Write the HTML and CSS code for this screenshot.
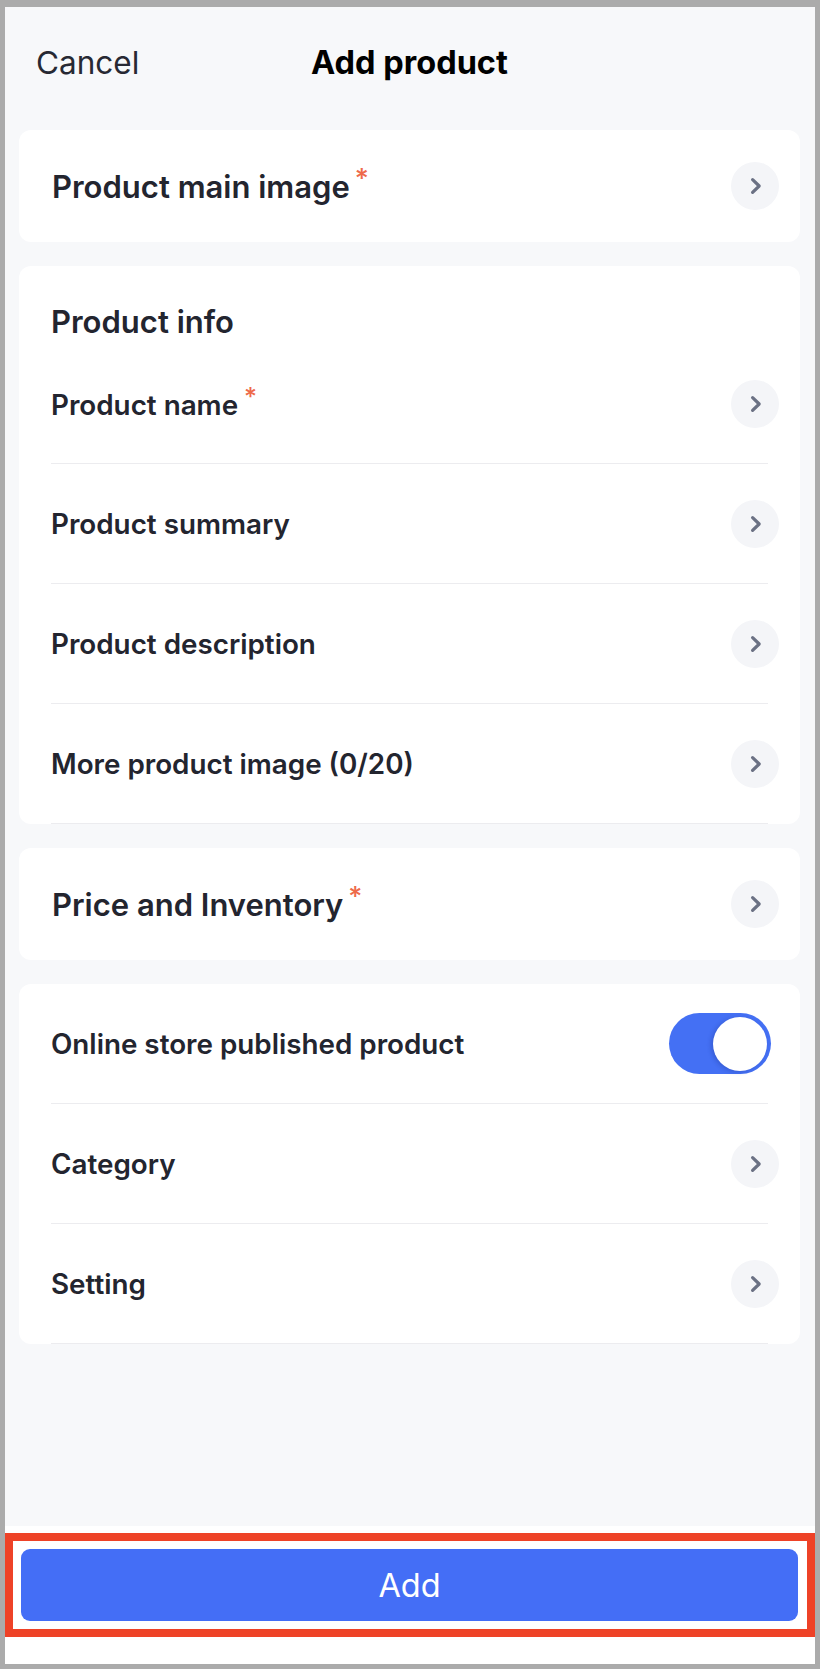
FILE: index.html
```html
<!DOCTYPE html>
<html lang="en">
<head>
<meta charset="utf-8">
<title>Add product</title>
<link rel="stylesheet" href="styles.css">
</head>
<body>
<div class="screen">
  <div class="content">
    <header class="topbar">
      <span class="cancel">Cancel</span>
      <span class="title">Add product</span>
      <span class="spacer"></span>
    </header>

    <section class="card card-single">
      <span class="card-title">Product main image<span class="req">*</span></span>
      <span class="chev"><svg viewBox="0 0 12 18" width="12" height="18"><path d="M2.6 2.6 L9.2 9 L2.6 15.4" fill="none" stroke="#6b7184" stroke-width="3.2" stroke-linecap="round" stroke-linejoin="round"/></svg></span>
    </section>

    <section class="card">
      <div class="card-head">Product info</div>
      <div class="row">
        <span class="row-label">Product name<span class="req req-sm">*</span></span>
        <span class="chev"><svg viewBox="0 0 12 18" width="12" height="18"><path d="M2.6 2.6 L9.2 9 L2.6 15.4" fill="none" stroke="#6b7184" stroke-width="3.2" stroke-linecap="round" stroke-linejoin="round"/></svg></span>
      </div>
      <div class="row">
        <span class="row-label">Product summary</span>
        <span class="chev"><svg viewBox="0 0 12 18" width="12" height="18"><path d="M2.6 2.6 L9.2 9 L2.6 15.4" fill="none" stroke="#6b7184" stroke-width="3.2" stroke-linecap="round" stroke-linejoin="round"/></svg></span>
      </div>
      <div class="row">
        <span class="row-label">Product description</span>
        <span class="chev"><svg viewBox="0 0 12 18" width="12" height="18"><path d="M2.6 2.6 L9.2 9 L2.6 15.4" fill="none" stroke="#6b7184" stroke-width="3.2" stroke-linecap="round" stroke-linejoin="round"/></svg></span>
      </div>
      <div class="row">
        <span class="row-label">More product image (0/20)</span>
        <span class="chev"><svg viewBox="0 0 12 18" width="12" height="18"><path d="M2.6 2.6 L9.2 9 L2.6 15.4" fill="none" stroke="#6b7184" stroke-width="3.2" stroke-linecap="round" stroke-linejoin="round"/></svg></span>
      </div>
    </section>

    <section class="card card-single">
      <span class="card-title">Price and Inventory<span class="req">*</span></span>
      <span class="chev"><svg viewBox="0 0 12 18" width="12" height="18"><path d="M2.6 2.6 L9.2 9 L2.6 15.4" fill="none" stroke="#6b7184" stroke-width="3.2" stroke-linecap="round" stroke-linejoin="round"/></svg></span>
    </section>

    <section class="card">
      <div class="row">
        <span class="row-label">Online store published product</span>
        <span class="toggle"><span class="knob"></span></span>
      </div>
      <div class="row">
        <span class="row-label">Category</span>
        <span class="chev"><svg viewBox="0 0 12 18" width="12" height="18"><path d="M2.6 2.6 L9.2 9 L2.6 15.4" fill="none" stroke="#6b7184" stroke-width="3.2" stroke-linecap="round" stroke-linejoin="round"/></svg></span>
      </div>
      <div class="row">
        <span class="row-label">Setting</span>
        <span class="chev"><svg viewBox="0 0 12 18" width="12" height="18"><path d="M2.6 2.6 L9.2 9 L2.6 15.4" fill="none" stroke="#6b7184" stroke-width="3.2" stroke-linecap="round" stroke-linejoin="round"/></svg></span>
      </div>
    </section>
  </div>

  <footer class="footer">
    <div class="highlight">
      <button class="add-btn" type="button">Add</button>
    </div>
  </footer>
</div>
</body>
</html>
```

FILE: styles.css
```css
* { box-sizing: border-box; }

html, body {
  margin: 0;
  padding: 0;
}

body {
  background: #ababab;
  padding: 7px 5px 5px 5px;
  font-family: Inter, "Noto Sans", "Liberation Sans", sans-serif;
  color: #23252f;
}

.screen {
  width: 810px;
  height: 1657px;
  background: #f7f8fa;
  display: flex;
  flex-direction: column;
}

.content {
  flex: 1;
  padding: 0 15px 0 14px;
}

.topbar {
  display: grid;
  grid-template-columns: 1fr auto 1fr;
  align-items: center;
  padding: 36px 0 47px 0;
  line-height: 40px;
}

.cancel {
  font-size: 31.5px;
  font-weight: 400;
  color: #272933;
  padding-left: 17px;
}

.title {
  font-size: 32.5px;
  font-weight: 700;
  color: #000;
}

.card {
  background: #fff;
  border-radius: 12px;
  margin-bottom: 24px;
}

.card-single {
  height: 112px;
  display: flex;
  align-items: center;
  justify-content: space-between;
  padding: 0 21px 0 33px;
}

.card-title,
.card-head {
  font-size: 31px;
  font-weight: 600;
  line-height: 40px;
  color: #23252f;
}

.card-head {
  padding: 36px 32px 2px 32px;
}

.req {
  color: #ee6a4a;
  font-size: 27px;
  font-weight: 500;
  vertical-align: 10px;
  margin-left: 5px;
  line-height: 1;
}

.req-sm {
  font-size: 25px;
  vertical-align: 9px;
  margin-left: 6px;
}

.row {
  height: 120px;
  margin: 0 32px;
  border-bottom: 1px solid #ececef;
  display: flex;
  align-items: center;
  justify-content: space-between;
}

.row-label {
  font-size: 27.8px;
  font-weight: 600;
  color: #23252f;
}

.chev {
  width: 48px;
  height: 48px;
  border-radius: 50%;
  background: #f4f5f8;
  display: flex;
  align-items: center;
  justify-content: center;
  flex: none;
}

.row .chev {
  margin-right: -11px;
}

.chev svg {
  display: block;
  margin-left: 2px;
}

.toggle {
  width: 102px;
  height: 61px;
  border-radius: 31px;
  background: #4470f4;
  display: flex;
  align-items: center;
  justify-content: flex-end;
  padding-right: 4px;
  margin-right: -3px;
  flex: none;
}

.knob {
  width: 54px;
  height: 54px;
  border-radius: 50%;
  background: #fff;
  box-shadow: -2px 1px 4px rgba(20, 40, 120, 0.25);
}

.footer {
  height: 138px;
  background: #fff;
  padding-top: 7px;
}

.highlight {
  border: 8px solid #ee4227;
  padding: 8px 9px 8px 8px;
}

.add-btn {
  display: block;
  width: 100%;
  height: 72px;
  border: 0;
  border-radius: 9px;
  background: #446ef6;
  color: #fff;
  font-family: Inter, "Noto Sans", "Liberation Sans", sans-serif;
  font-size: 32.5px;
  font-weight: 400;
  padding: 0;
}
```
